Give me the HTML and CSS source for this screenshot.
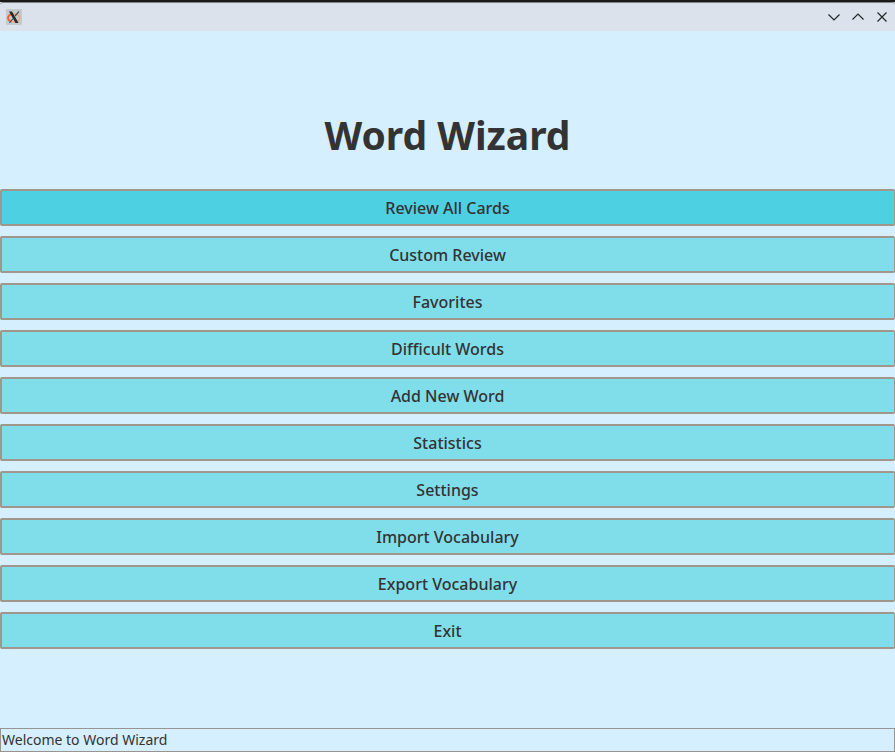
FILE: index.html
```html
<!DOCTYPE html>
<html lang="en">
<head>
<meta charset="utf-8">
<title>Word Wizard</title>
<link rel="stylesheet" href="styles.css">
</head>
<body>
<div class="window">
  <header class="titlebar">
    <svg class="app-icon" viewBox="0 0 16 16" aria-hidden="true">
      <rect width="16" height="16" rx="1" fill="#c3cacb"/>
      <ellipse cx="8" cy="9" rx="6" ry="4" fill="none" stroke="#f0a878" stroke-width="1.4"/>
      <path d="M5 5.200C1 7 1 11 5 12.600" fill="none" stroke="#f0592b" stroke-width="1.6"/>
      <path d="M3 2.500h3l6.500 11.500H9.500z" fill="#26292d"/>
      <path d="M13 2.500 9 7M7 9.500 3.500 14" stroke="#4a4e52" stroke-width="1.200"/>
    </svg>
    <div class="controls">
      <button class="control" type="button" aria-label="Minimize"><svg viewBox="0 0 16 16"><path d="M2.500 5.500 8 11l5.500-5.500"/></svg></button>
      <button class="control" type="button" aria-label="Maximize"><svg viewBox="0 0 16 16"><path d="M2.500 10.500 8 5l5.500 5.500"/></svg></button>
      <button class="control" type="button" aria-label="Close"><svg viewBox="0 0 16 16"><path d="M3.500 3.500l9 9M12.500 3.500l-9 9"/></svg></button>
    </div>
  </header>
  <main class="content">
    <h1 class="title">Word Wizard</h1>
    <nav class="menu">
      <button class="item active" type="button">Review All Cards</button>
      <button class="item" type="button">Custom Review</button>
      <button class="item" type="button">Favorites</button>
      <button class="item" type="button">Difficult Words</button>
      <button class="item" type="button">Add New Word</button>
      <button class="item" type="button">Statistics</button>
      <button class="item" type="button">Settings</button>
      <button class="item" type="button">Import Vocabulary</button>
      <button class="item" type="button">Export Vocabulary</button>
      <button class="item" type="button">Exit</button>
    </nav>
  </main>
  <footer class="status">Welcome to Word Wizard</footer>
</div>
</body>
</html>
```

FILE: styles.css
```css
* { box-sizing: border-box; }
body { margin: 0; font-family: "Noto Sans", sans-serif; color: #333; background: #d6efff; }
.window { display: flex; flex-direction: column; min-height: 100vh; border-top: 2px solid #1a1a1a; }
.titlebar { display: flex; align-items: center; justify-content: space-between; height: 29px; padding: 0 5px 0 6px; border-top: 1px solid #808287; border-radius: 3px 3px 0 0; background: #dce2ec; }
.app-icon { width: 16px; height: 16px; }
.controls { display: flex; gap: 8px; }
.control { width: 16px; height: 16px; padding: 0; border: 0; background: none; }
.control svg { display: block; width: 16px; height: 16px; fill: none; stroke: #232629; stroke-width: 1.2; }
.content { flex: 1; display: flex; flex-direction: column; justify-content: center; padding-bottom: 2px; }
.title { margin: 0 0 28px; font-size: 39px; line-height: 52px; text-align: center; }
.menu { display: flex; flex-direction: column; gap: 10px; }
.item { height: 37px; padding: 2px 1px 0 0; border: 2px solid #a0968c; border-right-width: 1px; border-radius: 2px; background: #80deea; color: #333; font: 500 16px/22px "Noto Sans", sans-serif; }
.item.active { background: #4dd0e1; }
.status { height: 24px; padding: 0 1px; border: 1px solid #999490; font-size: 14px; line-height: 22px; }
```
